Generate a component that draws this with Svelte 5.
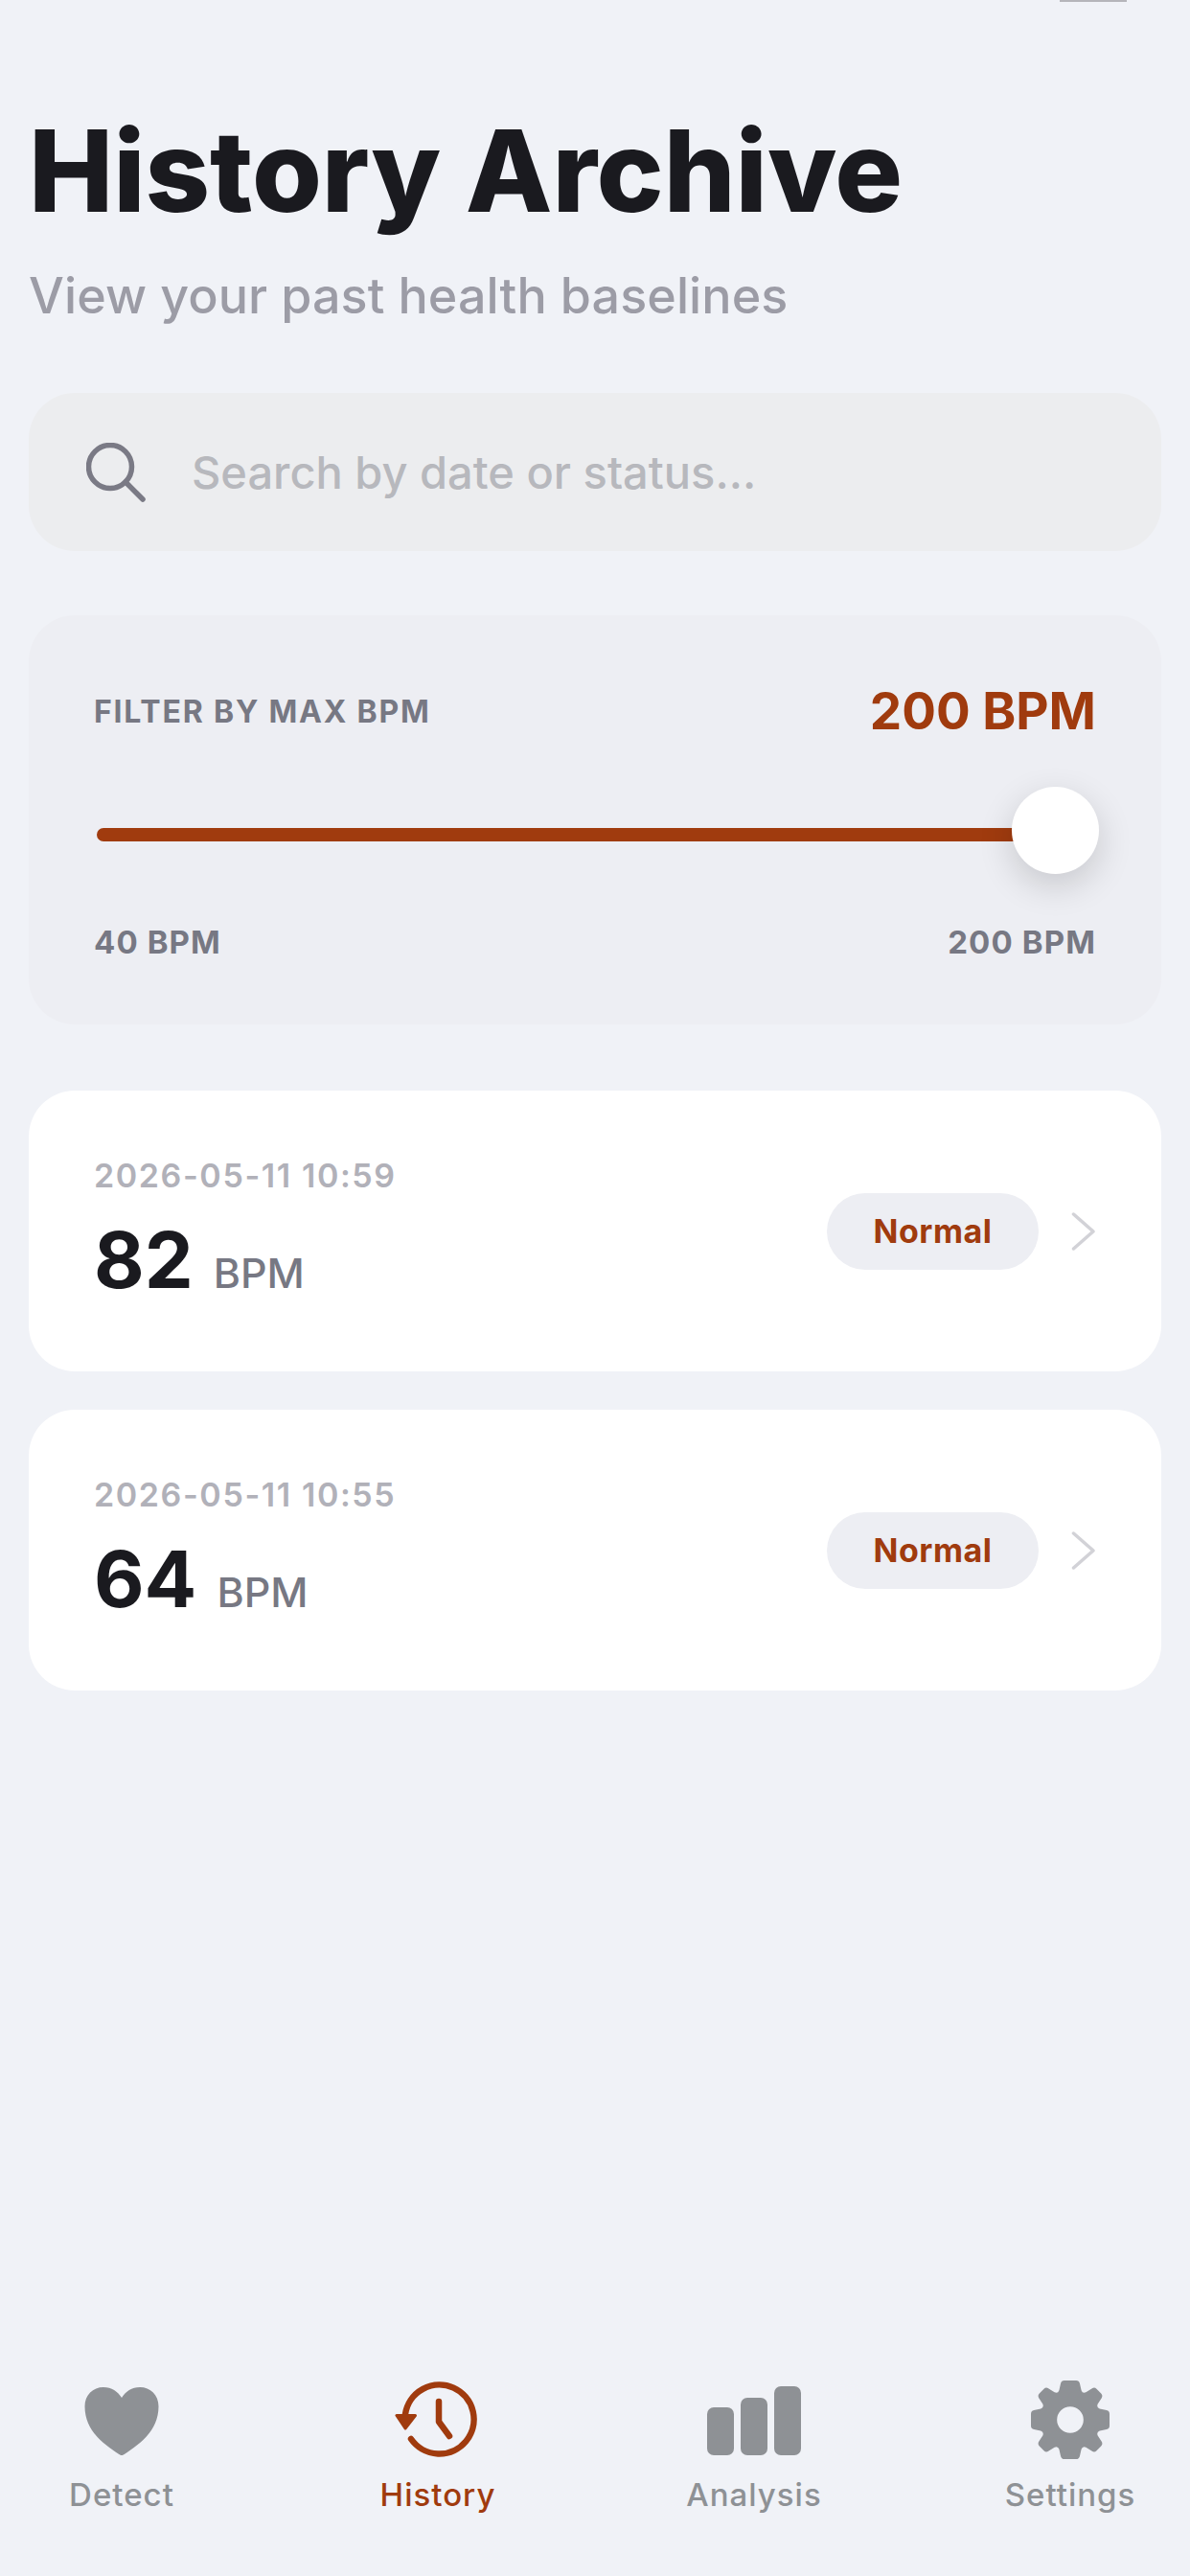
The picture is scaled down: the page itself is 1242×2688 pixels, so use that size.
<script>
  const records = [
    { date: '2026-05-11 10:59', bpm: 82, status: 'Normal' },
    { date: '2026-05-11 10:55', bpm: 64, status: 'Normal' }
  ];
</script>

<div class="page">
  <span class="notch-edge"></span>

  <header>
    <h1>History Archive</h1>
    <p>View your past health baselines</p>
  </header>

  <div class="search">
    <svg class="search-icon" viewBox="0 0 62 62" width="62" height="62" fill="none" stroke="#7a7a85" stroke-width="5.5" stroke-linecap="round">
      <circle cx="25" cy="25" r="22.500" />
      <path d="M41 41 L59 59" />
    </svg>
    <span>Search by date or status...</span>
  </div>

  <section class="filter">
    <div class="filter-head">
      <span class="filter-label">FILTER BY MAX BPM</span>
      <span class="filter-value">200 BPM</span>
    </div>
    <div class="slider">
      <div class="track"></div>
      <div class="thumb"></div>
    </div>
    <div class="range">
      <span>40 BPM</span>
      <span>200 BPM</span>
    </div>
  </section>

  <div class="list">
    {#each records as r}
      <div class="card">
        <div class="card-info">
          <div class="date">{r.date}</div>
          <div class="reading"><b>{r.bpm}</b><span>BPM</span></div>
        </div>
        <span class="badge">{r.status}</span>
        <svg class="chevron" viewBox="0 0 26 40" width="26" height="40" fill="none" stroke="#d2d2d7" stroke-width="3.500" stroke-linecap="round" stroke-linejoin="round">
          <path d="M2.500 2 L23 20 L2.500 38" />
        </svg>
      </div>
    {/each}
  </div>

  <nav>
    <div class="tab">
      <svg viewBox="0 0 80 80" width="80" height="80">
        <path fill="#8e9195" d="M40 77 C38.800 77 37.600 76.300 36.500 75.500 C22 65.500 1.500 52 1.500 26 C1.500 14 10 6 21 6 C29.500 6 36 10.500 40 17 C44 10.500 50.500 6 59 6 C70 6 78.500 14 78.500 26 C78.500 52 58 65.500 43.500 75.500 C42.400 76.300 41.200 77 40 77 Z" />
      </svg>
      <span>Detect</span>
    </div>
    <div class="tab active">
      <svg viewBox="0 0 90 80" width="90" height="80" fill="none" stroke="#a03b0e" stroke-width="6.500" stroke-linecap="round" stroke-linejoin="round">
        <path d="M11 34 A36 36 0 1 1 17 60" />
        <path d="M46 21 V42 L57 57" />
        <path d="M2 35.500 H21.500 L11 49 Z" fill="#a03b0e" stroke-width="3" />
      </svg>
      <span>History</span>
    </div>
    <div class="tab">
      <div class="bars">
        <i class="b1"></i>
        <i class="b2"></i>
        <i class="b3"></i>
      </div>
      <span>Analysis</span>
    </div>
    <div class="tab">
      <svg class="gear" viewBox="0 0 80 80" width="82" height="82">
        <path fill="#8e9195" fill-rule="evenodd" d="M34 0 H46 Q49 0 49.700 3 L51.300 10 Q52.500 13.500 56 12 L62.300 8 Q64.800 6.600 66.800 8.600 L71.400 13.200 Q73.400 15.200 72 17.700 L68 24 Q66.500 27.500 70 28.700 L77 30.300 Q80 31 80 34 V46 Q80 49 77 49.700 L70 51.300 Q66.500 52.500 68 56 L72 62.300 Q73.400 64.800 71.400 66.800 L66.800 71.400 Q64.800 73.400 62.300 72 L56 68 Q52.500 66.500 51.300 70 L49.700 77 Q49 80 46 80 H34 Q31 80 30.300 77 L28.700 70 Q27.500 66.500 24 68 L17.700 72 Q15.200 73.400 13.200 71.400 L8.600 66.800 Q6.600 64.800 8 62.300 L12 56 Q13.500 52.500 10 51.300 L3 49.700 Q0 49 0 46 V34 Q0 31 3 30.300 L10 28.700 Q13.500 27.500 12 24 L8 17.700 Q6.600 15.200 8.600 13.200 L13.200 8.600 Q15.200 6.600 17.700 8 L24 12 Q27.500 13.500 28.700 10 L30.300 3 Q31 0 34 0 Z M40 26.500 A13.500 13.500 0 1 0 40 53.500 A13.500 13.500 0 1 0 40 26.500 Z" />
      </svg>
      <span>Settings</span>
    </div>
  </nav>
</div>

<style>
  :global(body) {
    margin: 0;
    background: #f0f2f7;
  }

  .page {
    position: relative;
    box-sizing: border-box;
    height: 2688px;
    padding: 0 30px;
    display: flex;
    flex-direction: column;
    font-family: Inter, "Liberation Sans", sans-serif;
    background: #f0f2f7;
    overflow: hidden;
  }

  .notch-edge {
    position: absolute;
    top: 0;
    left: 1106px;
    width: 70px;
    height: 2px;
    background: #b5b5ba;
  }

  header {
    padding-top: 112px;
  }
  h1 {
    margin: 0;
    font-size: 118px;
    line-height: 132px;
    font-weight: 800;
    letter-spacing: -0.100px;
    color: #1a1a1f;
  }
  header p {
    margin: 34px 0 0;
    font-size: 52px;
    line-height: 62px;
    font-weight: 500;
    letter-spacing: 0.100px;
    color: #9c9ca6;
  }

  .search {
    margin-top: 70px;
    height: 165px;
    box-sizing: border-box;
    padding-left: 60px;
    display: flex;
    align-items: center;
    gap: 48px;
    background: #ecedef;
    border-radius: 48px;
    font-size: 47px;
    font-weight: 500;
    color: #b7b8bd;
  }
  .search-icon {
    flex: none;
  }

  .filter {
    margin-top: 67px;
    height: 427px;
    box-sizing: border-box;
    padding: 68px 68px 0;
    background: #edeef3;
    border-radius: 48px;
  }
  .filter-head {
    display: flex;
    justify-content: space-between;
    align-items: center;
    height: 64px;
  }
  .filter-label {
    font-size: 32px;
    font-weight: 700;
    letter-spacing: 1.800px;
    color: #777883;
  }
  .filter-value {
    font-size: 53px;
    font-weight: 700;
    color: #a03b0e;
  }

  .slider {
    position: relative;
    margin-top: 47px;
    height: 92px;
    display: flex;
    align-items: center;
  }
  .track {
    flex: 1;
    height: 14px;
    margin: 8px 10px 0 3px;
    border-radius: 7px;
    background: #a03b0e;
  }
  .thumb {
    position: absolute;
    right: -3px;
    top: 0;
    width: 91px;
    height: 91px;
    border-radius: 50%;
    background: #fff;
    box-shadow: 0 12px 36px rgba(0, 0, 0, 0.16);
  }

  .range {
    margin-top: 48px;
    display: flex;
    justify-content: space-between;
    font-size: 33px;
    line-height: 44px;
    font-weight: 700;
    letter-spacing: 1.100px;
    color: #777883;
  }

  .list {
    margin-top: 69px;
    display: flex;
    flex-direction: column;
    gap: 40px;
  }
  .card {
    height: 293px;
    box-sizing: border-box;
    padding: 0 68px;
    display: flex;
    align-items: center;
    background: #fff;
    border-radius: 48px;
  }
  .card-info {
    flex: 1;
  }
  .date {
    font-size: 34px;
    line-height: 44px;
    font-weight: 600;
    letter-spacing: 1.600px;
    color: #b1b1b9;
  }
  .reading {
    margin-top: 16px;
    display: flex;
    align-items: baseline;
    gap: 21px;
  }
  .reading b {
    font-size: 81px;
    line-height: 100px;
    font-weight: 700;
    color: #1a1a1f;
  }
  .reading span {
    font-size: 43px;
    font-weight: 500;
    color: #777883;
  }
  .badge {
    width: 221px;
    height: 80px;
    display: flex;
    align-items: center;
    justify-content: center;
    background: #edeef3;
    border-radius: 40px;
    font-size: 34px;
    font-weight: 700;
    letter-spacing: 0.500px;
    color: #a03b0e;
  }
  .chevron {
    margin-left: 34px;
    flex: none;
  }

  nav {
    margin: auto -30px 0;
    padding: 0 57px 63px 59px;
    display: flex;
    justify-content: space-between;
  }
  .tab {
    width: 136px;
    display: flex;
    flex-direction: column;
    align-items: center;
    gap: 16px;
    font-size: 33px;
    line-height: 44px;
    font-weight: 500;
    letter-spacing: 1px;
    color: #8e9195;
    white-space: nowrap;
  }
  .tab.active {
    color: #a03b0e;
  }
  .gear {
    margin: -1px 0;
  }
  .bars {
    box-sizing: border-box;
    width: 98px;
    height: 80px;
    padding-bottom: 3px;
    display: flex;
    align-items: flex-end;
    justify-content: space-between;
  }
  .bars i {
    width: 28px;
    border-radius: 7px;
    background: #8e9195;
  }
  .b1 { height: 50px; }
  .b2 { height: 60px; }
  .b3 { height: 72px; }
</style>
